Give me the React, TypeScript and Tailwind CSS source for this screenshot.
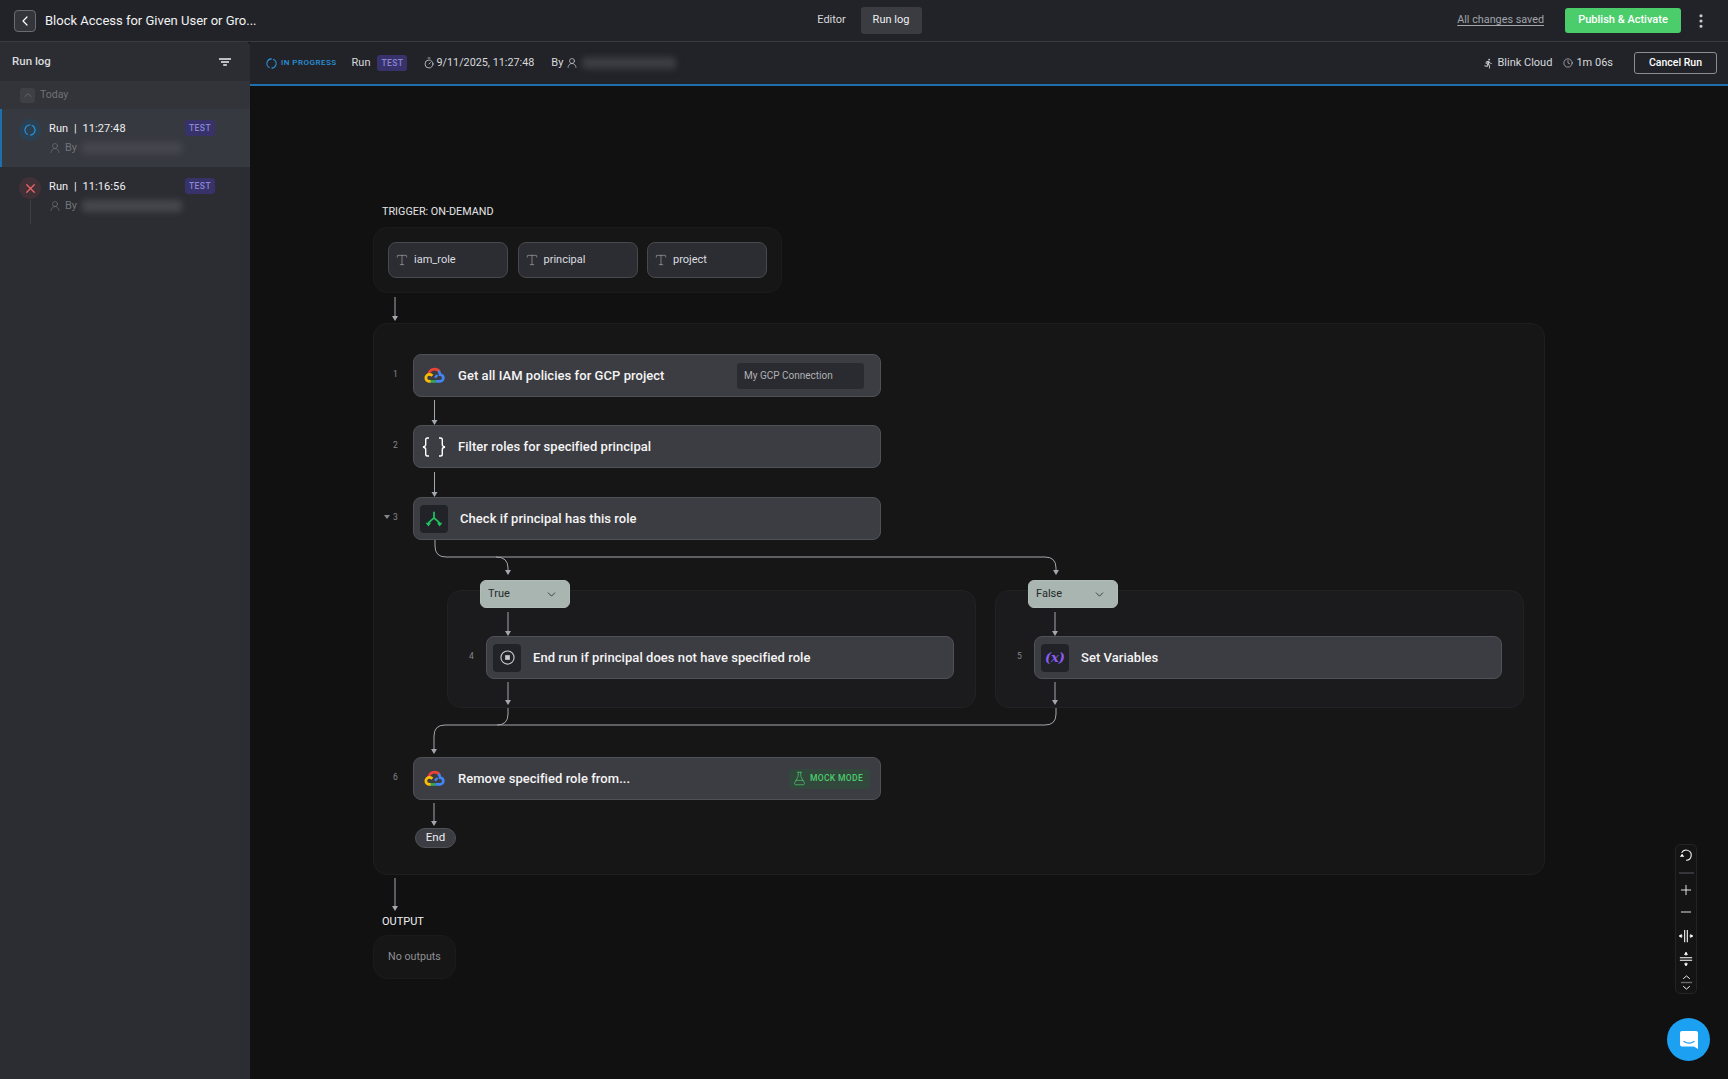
import { ChevronDown, ChevronLeft, ChevronUp, FlaskConical, Minus, Plus, Timer, Type, UserRound, Clock, X, MoreVertical } from 'lucide-react';
import { MdDirectionsRun } from 'react-icons/md';
import type { ReactNode } from 'react';

function GoogleCloud({ className }: { className?: string }) {
    return (
        <svg viewBox="0 0 24 20" className={className} fill="none" strokeWidth="3.2">
            <path d="M5.2 8.6C6 5 8.8 2.6 12.2 2.6c2.4 0 4.4 1.1 5.7 3" stroke="#ea4335" />
            <path d="M16.600 4.800c1.200 1.100 2 2.700 2 4.300 2.200.1 3.800 1.700 3.800 3.800 0 2.200-1.700 3.900-3.900 3.900H13" stroke="#4285f4" />
            <path d="M13.200 17H6.600" stroke="#34a853" />
            <path d="M7.400 17H6.200c-2.400 0-4.400-1.700-4.400-4 0-2.400 2-4.200 4.400-4.200 1.300 0 2.500.6 3.300 1.500" stroke="#fbbc05" />
            <path d="M12.500 12.500l3-3" stroke="#4285f4" strokeWidth="2.600" />
        </svg>
    );
}

function BracesIcon() {
    return (
        <svg viewBox="0 0 26 20" className="h-[20px] w-[26px]" fill="none" stroke="white" strokeWidth="1.400">
            <path d="M8 1H6.500C5.300 1 4.700 1.700 4.700 2.800V7.500C4.700 8.800 3.800 9.700 2 10c1.800.3 2.700 1.200 2.700 2.500v4.700c0 1.100.6 1.800 1.800 1.800H8" />
            <path d="M18 1h1.500c1.200 0 1.800.7 1.800 1.800V7.500c0 1.300.9 2.200 2.700 2.500-1.800.3-2.700 1.200-2.700 2.500v4.700c0 1.100-.6 1.800-1.800 1.800H18" />
        </svg>
    );
}

function ForkIcon() {
    return (
        <svg viewBox="0 0 16 16" className="h-[18px] w-[18px]" fill="none" stroke="#22c55e" strokeWidth="1.500">
            <path d="M8 1.500V7M8 7l-5 4.500M8 7l5 4.500" />
            <path d="M.6 11.400h4.800L3 14.600zM10.600 11.400h4.800L13 14.600z" fill="#22c55e" stroke="none" />
        </svg>
    );
}

function StopIcon() {
    return (
        <svg viewBox="0 0 16 16" className="h-[15px] w-[15px]" fill="none" stroke="#c8c9cc" strokeWidth="1.200">
            <circle cx="8" cy="8" r="7" />
            <rect x="5.500" y="5.500" width="5" height="5" fill="#c8c9cc" stroke="none" />
        </svg>
    );
}

function Spinner({ className }: { className?: string }) {
    return (
        <svg viewBox="0 0 12 12" className={className} fill="none" stroke="#2a93dd" strokeWidth="1.200">
            <circle cx="6" cy="6" r="5" strokeDasharray="13.500 2.200" transform="rotate(-70 6 6)" />
        </svg>
    );
}

function TestBadge({ className }: { className?: string }) {
    return (
        <span className={`flex h-[16px] w-[30px] items-center justify-center rounded-[3px] bg-[#37326a] text-[8.500px] font-medium tracking-[0.05em] text-[#8a85d4] ${className ?? ''}`}>
            TEST
        </span>
    );
}

function IconTile({ children }: { children: ReactNode }) {
    return <span className="flex h-[28px] w-[28px] shrink-0 items-center justify-center rounded-[4px] bg-[#212328]">{children}</span>;
}

type StepProps = {
    num: string;
    icon: ReactNode;
    title: string;
    right?: ReactNode;
    caret?: boolean;
    tile?: boolean;
    nested?: boolean;
};

function Step({ num, icon, title, right, caret, tile, nested }: StepProps) {
    return (
        <div className="relative flex h-[43px] items-center rounded-[8px] border border-[#505157] bg-[#3c3d42] pr-[10px]">
            <span className={`absolute top-[13px] flex items-center text-[8.500px] text-[#85868a] ${nested ? 'left-[-18px]' : 'left-[-21px]'}`}>
                {caret && <span className="absolute left-[-9px] h-0 w-0 border-x-[3px] border-t-[4px] border-x-transparent border-t-[#85868a]" />}
                {num}
            </span>
            {tile ? (
                <span className="ml-[6px] mr-[12px] shrink-0">{icon}</span>
            ) : (
                <span className="ml-[7px] mr-[11px] flex w-[26px] shrink-0 justify-center">{icon}</span>
            )}
            <span className="text-[13px] font-medium tracking-[0.05px] text-[#f4f4f5]">{title}</span>
            {right && <span className="ml-auto">{right}</span>}
        </div>
    );
}

function BranchPill({ label }: { label: string }) {
    return (
        <div className="absolute left-[32px] top-[-11px] flex h-[28px] w-[90px] items-center justify-between rounded-[6px] border border-[#b1bcb7] bg-[#a8b5b0] pl-[7px] pr-[11px] text-[11px] text-[#26282b]">
            {label}
            <ChevronDown className="h-[13px] w-[13px]" strokeWidth={1.500} />
        </div>
    );
}

function Connectors() {
    const line =
        'M395 297V318M434.500 400V422M434.500 472V494M435 540V546Q435 557 446 557H1045Q1056 557 1056 568V572M496 557Q508 557 508 568V572M508 612V633M1055 612V633M508 682V702M1055 682V702M508 708V714Q508 725 497 725H445Q434 725 434 736V751M1056 708V714Q1056 725 1045 725H497M434 803V823M395 878V908';
    const heads = [
        [395, 320], [434.5, 424], [434.5, 496], [508, 574], [1056, 574], [508, 635], [1055, 635], [508, 704], [1055, 704], [434, 753], [434, 825], [395, 910],
    ];
    return (
        <svg className="pointer-events-none absolute left-0 top-0 h-[993px] w-[1478px]" viewBox="250 86 1478 993" fill="none">
            <path d={line} stroke="#a4a7ae" strokeWidth="1" />
            {heads.map(([x, y]) => (
                <path key={`${x}-${y}`} d={`M${x - 3} ${y - 4}h6l-3 5z`} fill="#a4a7ae" />
            ))}
        </svg>
    );
}

function RunRow({ time, selected, failed }: { time: string; selected?: boolean; failed?: boolean }) {
    return (
        <div className={`relative h-[58px] pt-[12px] ${selected ? 'border-l-2 border-[#1f6fae] bg-[#373940] pl-[47px]' : 'pl-[49px]'}`}>
            <span className={`absolute top-[10px] flex h-[22px] w-[22px] items-center justify-center rounded-full ${selected ? 'left-[17px] bg-[#2b4152]' : 'left-[19px] bg-[#3f3136]'}`}>
                {failed ? <X className="h-[15px] w-[15px] text-[#f0656a]" strokeWidth={2} /> : <Spinner className="h-[12px] w-[12px]" />}
            </span>
            {failed && <span className="absolute left-[30px] top-[33px] h-[24px] w-px bg-[#3c3e44]" />}
            <div className="text-[11px] leading-[16px] tracking-[0.01em] text-[#f0f0f2]">Run&nbsp;&nbsp;|&nbsp;&nbsp;{time}</div>
            <TestBadge className="absolute right-[35px] top-[11px]" />
            <div className="mt-[3px] flex items-center gap-[4px] text-[11px] leading-[16px] text-[#72747a]">
                <UserRound className="h-[12px] w-[12px]" strokeWidth={1.300} />
                <span>By</span>
                <span className="ml-[1px] h-[12px] w-[100px] rounded-sm bg-[#45474d] blur-[3px]" />
            </div>
        </div>
    );
}

export default function App() {
    return (
        <div className="flex h-[1079px] w-[1728px] flex-col overflow-hidden bg-[#111112] font-['Roboto',sans-serif]">
            {/* Шапка */}
            <header className="grid h-[42px] shrink-0 grid-cols-[1fr_auto_1fr] items-center border-b border-[#3a3b40] bg-[#212329] pl-[14px] pr-[18px]">
                <div className="flex items-center gap-[9px]">
                    <button className="flex h-[22px] w-[22px] items-center justify-center rounded-[4px] border border-[#6a6c72] bg-[#33353b]">
                        <ChevronLeft className="h-[16px] w-[16px] text-white" strokeWidth={1.800} />
                    </button>
                    <span className="text-[13px] text-[#f2f2f3]">Block Access for Given User or Gro...</span>
                </div>
                <div className="flex items-center text-[11px] text-[#d8d9db]">
                    <span className="flex h-[27px] w-[58px] items-center justify-center">Editor</span>
                    <span className="flex h-[27px] w-[61px] items-center justify-center rounded-[3px] bg-[#3a3c42] text-[#eeeef0]">Run log</span>
                </div>
                <div className="flex items-center justify-end">
                    <span className="text-[10.800px] text-[#a3a5aa] underline underline-offset-2">All changes saved</span>
                    <button className="ml-[21px] h-[25px] w-[116px] rounded-[3px] bg-[#4ccd6c] text-[11px] font-medium text-white">Publish &amp; Activate</button>
                    <MoreVertical className="ml-[11px] h-[18px] w-[18px] text-[#c9cacd]" strokeWidth={2.200} />
                </div>
            </header>

            <div className="flex min-h-0 flex-1">
                {/* Сайдбар */}
                <aside className="w-[250px] shrink-0 rounded-tr-[4px] bg-[#2b2d33]">
                    <div className="flex h-[39px] items-center justify-between pl-[12px] pr-[19px]">
                        <span className="text-[11.500px] font-medium text-[#d9dadc]">Run log</span>
                        <svg viewBox="0 0 12 8" className="h-[8px] w-[12px]" fill="none" stroke="#f0f0f2" strokeWidth="1.400">
                            <path d="M0 1h12M2 4h8M4.200 7h3.600" />
                        </svg>
                    </div>
                    <div className="flex h-[28px] items-center gap-[5px] bg-[#32343a] pl-[20px] text-[10.500px] text-[#6f7177]">
                        <span className="flex h-[15px] w-[15px] items-center justify-center rounded-[3px] bg-[#3e4046]">
                            <ChevronUp className="h-[12px] w-[12px]" strokeWidth={1.500} />
                        </span>
                        Today
                    </div>
                    <RunRow time="11:27:48" selected />
                    <RunRow time="11:16:56" failed />
                </aside>

                <main className="relative min-w-0 flex-1">
                    {/* Строка статуса */}
                    <div className="flex h-[44px] items-center border-b-2 border-[#1f6fae] bg-[#212329] pl-[16px] pr-[11px] text-[11px] text-[#d8d9db]">
                        <Spinner className="h-[11px] w-[11px]" />
                        <span className="ml-[4px] text-[8px] font-medium tracking-[0.06em] text-[#2a93dd]">IN PROGRESS</span>
                        <span className="ml-[15px]">Run</span>
                        <TestBadge className="ml-[7px]" />
                        <Timer className="ml-[16px] h-[12px] w-[12px]" strokeWidth={1.500} />
                        <span className="ml-[1px] text-[10.800px]">9/11/2025, 11:27:48</span>
                        <span className="ml-[17px]">By</span>
                        <UserRound className="ml-[3px] h-[12px] w-[12px]" strokeWidth={1.300} />
                        <span className="ml-[4px] h-[12px] w-[94px] rounded-sm bg-[#3b3d43] blur-[3px]" />
                        <MdDirectionsRun className="ml-auto h-[11px] w-[11px] text-[#c9cacd]" />
                        <span className="ml-[3px]">Blink Cloud</span>
                        <Clock className="ml-[11px] h-[10px] w-[10px]" strokeWidth={1.500} />
                        <span className="ml-[3px]">1m 06s</span>
                        <button className="ml-[21px] h-[22px] w-[83px] rounded-[3px] border border-[#8b8d92] text-[10.500px] font-medium text-white">Cancel Run</button>
                    </div>

                    {/* Схема запуска */}
                    <div className="relative h-[993px] pl-[123px] pt-[118px]">
                        <div className="pl-[9px] text-[10.800px] leading-[16px] text-[#e4e4e6]">TRIGGER: ON-DEMAND</div>
                        <div className="mt-[7px] flex h-[66px] w-[409px] items-center gap-[9.500px] rounded-[14px] border border-[#1b1b1d] bg-[#161617] pl-[14px]">
                            {['iam_role', 'principal', 'project'].map((name) => (
                                <div key={name} className="flex h-[36px] w-[120px] items-center gap-[5px] rounded-[8px] border border-[#48494e] bg-[#2c2d32] pl-[6px] text-[11px] text-[#dcdde0]">
                                    <Type className="h-[14px] w-[14px] text-[#b6b7ba]" strokeWidth={1} />
                                    {name}
                                </div>
                            ))}
                        </div>

                        <div className="mt-[30px] h-[552px] w-[1172px] rounded-[14px] border border-[#1e1e20] bg-[#161617] pl-[39px] pt-[30px]">
                            <div className="flex w-[468px] flex-col gap-[28px]">
                                <Step
                                    num="1"
                                    icon={<GoogleCloud className="h-[17px] w-[21px]" />}
                                    title="Get all IAM policies for GCP project"
                                    right={
                                        <span className="mr-[6px] flex h-[26px] w-[127px] items-center rounded-[3px] bg-[#2a2b30] pl-[7px] text-[10px] text-[#b0b1b5]">My GCP Connection</span>
                                    }
                                />
                                <Step num="2" icon={<BracesIcon />} title="Filter roles for specified principal" />
                                <div className="mt-[1px]">
                                    <Step num="3" caret tile icon={<IconTile><ForkIcon /></IconTile>} title="Check if principal has this role" />
                                </div>
                            </div>

                            <div className="ml-[34px] mt-[50px] grid w-[1077px] grid-cols-2 gap-[19px]">
                                <div className="relative h-[118px] rounded-[14px] border border-[#212224] bg-[#1b1b1d] pl-[38px] pr-[21px] pt-[45px]">
                                    <BranchPill label="True" />
                                    <Step num="4" nested tile icon={<IconTile><StopIcon /></IconTile>} title="End run if principal does not have specified role" />
                                </div>
                                <div className="relative h-[118px] rounded-[14px] border border-[#212224] bg-[#1b1b1d] pl-[38px] pr-[21px] pt-[45px]">
                                    <BranchPill label="False" />
                                    <Step
                                        num="5"
                                        nested
                                        tile
                                        icon={
                                            <IconTile>
                                                <span className="font-['DejaVu_Serif',serif] text-[13px] font-bold italic text-[#8b5cf6]">(x)</span>
                                            </IconTile>
                                        }
                                        title="Set Variables"
                                    />
                                </div>
                            </div>

                            <div className="mt-[49px] w-[468px]">
                                <Step
                                    num="6"
                                    icon={<GoogleCloud className="h-[17px] w-[21px]" />}
                                    title="Remove specified role from..."
                                    right={
                                        <span className="flex h-[20px] w-[81px] items-center gap-[3px] rounded-[3px] bg-[#33483c] pl-[3px] text-[8.500px] font-medium tracking-[0.04em] text-[#4ccd6c]">
                                            <FlaskConical className="h-[15px] w-[15px]" strokeWidth={1.100} />
                                            MOCK MODE
                                        </span>
                                    }
                                />
                            </div>

                            <div className="ml-[2px] mt-[28px] flex h-[20px] w-[41px] items-center justify-center rounded-full border border-[#505157] bg-[#3c3d42] text-[11.500px] text-[#eeeef0]">End</div>
                        </div>

                        <div className="mt-[39px] pl-[9px] text-[11px] leading-[16px] text-[#f0f0f2]">OUTPUT</div>
                        <div className="mt-[5px] flex h-[44px] w-[83px] items-center justify-center rounded-[14px] border border-[#1b1b1d] bg-[#161617] text-[10.700px] text-[#8f9094]">No outputs</div>

                        <Connectors />

                        {/* Панель масштаба */}
                        <div className="absolute left-[1425px] top-[758px] flex h-[150px] w-[22px] flex-col items-center rounded-[5px] border border-[#242426] bg-[#141415] text-white">
                            <svg viewBox="0 0 16 16" className="mt-[3px] h-[14px] w-[14px]" fill="none" stroke="currentColor" strokeWidth="1.200">
                                <path d="M3 5.500A5.800 5.800 0 1 1 8 14" />
                                <path d="M1 7h5L3.500 10.500z" fill="currentColor" stroke="none" transform="rotate(180 3.500 8.500)" />
                            </svg>
                            <span className="mt-[10px] h-[2px] w-[15px] shrink-0 bg-[#35363a]" />
                            <Plus className="mt-[8px] h-[16px] w-[16px] shrink-0" strokeWidth={1.300} />
                            <Minus className="mt-[6px] h-[16px] w-[16px] shrink-0" strokeWidth={1.300} />
                            <svg viewBox="0 0 16 16" className="mt-[9px] h-[14px] w-[14px] shrink-0" fill="none" stroke="currentColor" strokeWidth="1.200">
                                <path d="M6.500 1v14M9.500 1v14M0 8h4M12 8h4" />
                                <path d="M0 8l3-2.500v5zM16 8l-3-2.500v5z" fill="currentColor" stroke="none" />
                            </svg>
                            <svg viewBox="0 0 16 16" className="mt-[9px] h-[14px] w-[14px] shrink-0" fill="none" stroke="currentColor" strokeWidth="1.200">
                                <path d="M1 6.500h14M1 9.500h14M8 0v4M8 12v4" />
                                <path d="M8 0l-2.500 3h5zM8 16l-2.500-3h5z" fill="currentColor" stroke="none" />
                            </svg>
                            <svg viewBox="0 0 16 16" className="mt-[9px] h-[15px] w-[15px] shrink-0" fill="none" stroke="currentColor" strokeWidth="1">
                                <path d="M4.500 4 8 1l3.500 3M4.500 12 8 15l3.500-3" />
                                <path d="M2 8h12" stroke="#6a6b70" strokeWidth="1.500" />
                            </svg>
                        </div>

                        {/* Чат */}
                        <div className="absolute left-[1417px] top-[932px] flex h-[43px] w-[43px] items-center justify-center rounded-full bg-[#1ba0f2]">
                            <svg viewBox="0 0 20 20" className="h-[20px] w-[20px]">
                                <path d="M3 1h14a2 2 0 0 1 2 2v16l-4-2.500H3a2 2 0 0 1-2-2V3a2 2 0 0 1 2-2z" fill="white" />
                                <path d="M5 11.500c3 2 7 2 10 0" fill="none" stroke="#1ba0f2" strokeWidth="1.300" strokeLinecap="round" />
                            </svg>
                        </div>
                    </div>
                </main>
            </div>
        </div>
    );
}
